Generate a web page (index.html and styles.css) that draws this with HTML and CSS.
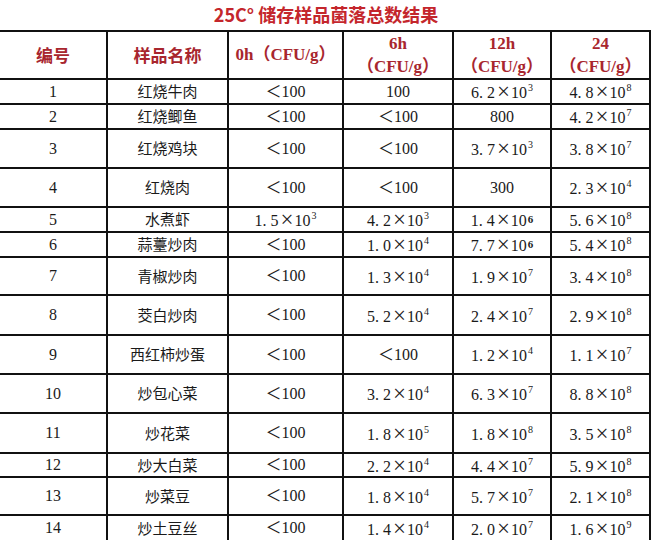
FILE: index.html
```html
<!DOCTYPE html>
<html lang="zh">
<head>
<meta charset="utf-8">
<title>25C° 储存样品菌落总数结果</title>
<link rel="stylesheet" href="styles.css">
</head>
<body>
<div class="page">
  <h1 class="title">25C° 储存样品菌落总数结果</h1>
  <div class="grid">
    <div class="cell head cjk">编号</div>
    <div class="cell head cjk">样品名称</div>
    <div class="cell head">0h（CFU/g）</div>
    <div class="cell head"><span>6h<br>（CFU/g）</span></div>
    <div class="cell head"><span>12h<br>（CFU/g）</span></div>
    <div class="cell head"><span>24<br>（CFU/g）</span></div>

    <div class="cell">1</div><div class="cell cjk">红烧牛肉</div><div class="cell">＜100</div><div class="cell">100</div><div class="cell"><span>6. 2<span class="x">×</span>10<sup>3</sup></span></div><div class="cell"><span>4. 8<span class="x">×</span>10<sup>8</sup></span></div>
    <div class="cell">2</div><div class="cell cjk">红烧鲫鱼</div><div class="cell">＜100</div><div class="cell">＜100</div><div class="cell">800</div><div class="cell"><span>4. 2<span class="x">×</span>10<sup>7</sup></span></div>
    <div class="cell">3</div><div class="cell cjk">红烧鸡块</div><div class="cell">＜100</div><div class="cell">＜100</div><div class="cell"><span>3. 7<span class="x">×</span>10<sup>3</sup></span></div><div class="cell"><span>3. 8<span class="x">×</span>10<sup>7</sup></span></div>
    <div class="cell">4</div><div class="cell cjk">红烧肉</div><div class="cell">＜100</div><div class="cell">＜100</div><div class="cell">300</div><div class="cell"><span>2. 3<span class="x">×</span>10<sup>4</sup></span></div>
    <div class="cell">5</div><div class="cell cjk">水煮虾</div><div class="cell"><span>1. 5<span class="x">×</span>10<sup>3</sup></span></div><div class="cell"><span>4. 2<span class="x">×</span>10<sup>3</sup></span></div><div class="cell"><span>1. 4<span class="x">×</span>10<sup class="b">6</sup></span></div><div class="cell"><span>5. 6<span class="x">×</span>10<sup>8</sup></span></div>
    <div class="cell">6</div><div class="cell cjk">蒜薹炒肉</div><div class="cell">＜100</div><div class="cell"><span>1. 0<span class="x">×</span>10<sup>4</sup></span></div><div class="cell"><span>7. 7<span class="x">×</span>10<sup class="b">6</sup></span></div><div class="cell"><span>5. 4<span class="x">×</span>10<sup>8</sup></span></div>
    <div class="cell">7</div><div class="cell cjk">青椒炒肉</div><div class="cell">＜100</div><div class="cell"><span>1. 3<span class="x">×</span>10<sup>4</sup></span></div><div class="cell"><span>1. 9<span class="x">×</span>10<sup>7</sup></span></div><div class="cell"><span>3. 4<span class="x">×</span>10<sup>8</sup></span></div>
    <div class="cell">8</div><div class="cell cjk">茭白炒肉</div><div class="cell">＜100</div><div class="cell"><span>5. 2<span class="x">×</span>10<sup>4</sup></span></div><div class="cell"><span>2. 4<span class="x">×</span>10<sup>7</sup></span></div><div class="cell"><span>2. 9<span class="x">×</span>10<sup>8</sup></span></div>
    <div class="cell">9</div><div class="cell cjk">西红柿炒蛋</div><div class="cell">＜100</div><div class="cell">＜100</div><div class="cell"><span>1. 2<span class="x">×</span>10<sup>4</sup></span></div><div class="cell"><span>1. 1<span class="x">×</span>10<sup>7</sup></span></div>
    <div class="cell">10</div><div class="cell cjk">炒包心菜</div><div class="cell">＜100</div><div class="cell"><span>3. 2<span class="x">×</span>10<sup>4</sup></span></div><div class="cell"><span>6. 3<span class="x">×</span>10<sup>7</sup></span></div><div class="cell"><span>8. 8<span class="x">×</span>10<sup>8</sup></span></div>
    <div class="cell">11</div><div class="cell cjk">炒花菜</div><div class="cell">＜100</div><div class="cell"><span>1. 8<span class="x">×</span>10<sup>5</sup></span></div><div class="cell"><span>1. 8<span class="x">×</span>10<sup>8</sup></span></div><div class="cell"><span>3. 5<span class="x">×</span>10<sup>8</sup></span></div>
    <div class="cell">12</div><div class="cell cjk">炒大白菜</div><div class="cell">＜100</div><div class="cell"><span>2. 2<span class="x">×</span>10<sup>4</sup></span></div><div class="cell"><span>4. 4<span class="x">×</span>10<sup>7</sup></span></div><div class="cell"><span>5. 9<span class="x">×</span>10<sup>8</sup></span></div>
    <div class="cell">13</div><div class="cell cjk">炒菜豆</div><div class="cell">＜100</div><div class="cell"><span>1. 8<span class="x">×</span>10<sup>4</sup></span></div><div class="cell"><span>5. 7<span class="x">×</span>10<sup>7</sup></span></div><div class="cell"><span>2. 1<span class="x">×</span>10<sup>8</sup></span></div>
    <div class="cell">14</div><div class="cell cjk">炒土豆丝</div><div class="cell">＜100</div><div class="cell"><span>1. 4<span class="x">×</span>10<sup>4</sup></span></div><div class="cell"><span>2. 0<span class="x">×</span>10<sup>7</sup></span></div><div class="cell"><span>1. 6<span class="x">×</span>10<sup>9</sup></span></div>
  </div>
</div>
</body>
</html>
```
FILE: styles.css
```css
html, body {
  margin: 0;
  padding: 0;
  background: #ffffff;
}

.page {
  width: 652px;
  height: 540px;
  overflow: hidden;
}

.title {
  margin: 0;
  height: 30px;
  display: flex;
  align-items: center;
  justify-content: center;
  font-family: "Noto Sans CJK SC", "Liberation Sans", sans-serif;
  font-size: 18px;
  font-weight: 700;
  color: #c4262c;
  line-height: 1;
  padding-bottom: 2px;
  box-sizing: border-box;
}

.grid {
  display: grid;
  grid-template-columns: 106px 119px 113px 108px 96px 97px;
  grid-template-rows: 46px 23px 23px 37px 37px 23px 23px 36px 38px 37px 37px 38px 22px 36px 24px;
  gap: 2px;
  background: #111111;
  border-top: 2px solid #111111;
  border-right: 2px solid #111111;
  width: 651px;
  box-sizing: border-box;
}

.cell {
  background: #ffffff;
  display: flex;
  align-items: center;
  justify-content: center;
  text-align: center;
  font-family: "Liberation Serif", "Noto Sans CJK SC", serif;
  font-size: 16px;
  color: #1a1a1a;
  line-height: 1.1;
  white-space: nowrap;
}

.cjk {
  font-family: "Noto Sans CJK SC", sans-serif;
  font-size: 15px;
  font-weight: 400;
}

.head {
  font-weight: 700;
  color: #a8262e;
  font-size: 17px;
  line-height: 1.3;
  padding-top: 1px;
}

.head.cjk {
  font-size: 17px;
  font-weight: 700;
}

.x {
  font-size: 23px;
  line-height: 1;
  vertical-align: -1px;
  margin: 0 1px 0 2px;
}

sup {
  font-size: 10px;
  line-height: 0;
  vertical-align: 7px;
  margin-left: 1px;
}

sup.b {
  font-weight: 700;
  font-size: 11px;
  vertical-align: 3px;
}
```
